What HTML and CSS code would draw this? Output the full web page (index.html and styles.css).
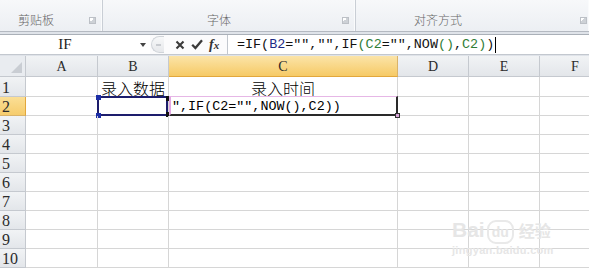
FILE: index.html
```html
<!DOCTYPE html>
<html lang="zh-CN">
<head>
  <meta charset="UTF-8">
  <title>录入时间</title>
  <link rel="stylesheet" href="styles.css">
</head>
<body>
  <!-- ribbon groups -->
  <div class="ribbon">
    <div class="group group-clip">
      <span class="group-label">剪贴板</span>
      <span class="launcher"></span>
    </div>
    <div class="group group-font">
      <span class="group-label">字体</span>
      <span class="launcher"></span>
    </div>
    <div class="group group-align">
      <span class="group-label">对齐方式</span>
      <span class="launcher"></span>
    </div>
  </div>

  <!-- formula bar -->
  <div class="formula-row">
    <div class="formula-bar">
      <div class="name-box">
        <span class="name-text">IF</span>
        <span class="name-arrow"></span>
      </div>
      <div class="tools">
        <span class="grip"><span class="grip-dash"></span></span>
        <svg class="tool-icon icon-cancel" width="10" height="10" viewBox="0 0 10 10">
          <path d="M1.5 1.5 L8.5 8.5 M8.5 1.5 L1.5 8.5" stroke="#3a3a3a" stroke-width="2.1" fill="none"/>
        </svg>
        <svg class="tool-icon icon-enter" width="12" height="11" viewBox="0 0 12 11">
          <path d="M1.2 5.8 L4.4 9 L11 1.2" stroke="#3a3a3a" stroke-width="2.3" fill="none"/>
        </svg>
        <span class="fx">f<span class="fx-x">x</span></span>
      </div>
      <div class="formula-input">
        <span class="formula-text">=IF(<span class="ref-b">B2</span>="","",IF<span class="paren">(</span><span class="ref-c">C2</span>="",NOW<span class="paren">()</span>,<span class="ref-c">C2</span><span class="paren">)</span>)</span><span class="caret"></span>
      </div>
    </div>
  </div>

  <!-- worksheet -->
  <div class="sheet">
    <div class="hd corner"><span class="corner-mark"></span></div>
    <div class="hd col">A</div>
    <div class="hd col">B</div>
    <div class="hd col col-active">C</div>
    <div class="hd col">D</div>
    <div class="hd col">E</div>
    <div class="hd col">F</div>

    <div class="hd row">1</div>
    <div class="cell"></div>
    <div class="cell cell-text">录入数据</div>
    <div class="cell cell-text">录入时间</div>
    <div class="cell"></div>
    <div class="cell"></div>
    <div class="cell"></div>

    <div class="hd row row-active">2</div>
    <div class="cell"></div>
    <div class="cell cell-active">
      <span class="active-frame"></span>
      <span class="handle handle-tl"></span>
      <span class="handle handle-bl"></span>
      <span class="mark mark-tr"></span>
      <span class="mark mark-br"></span>
    </div>
    <div class="cell cell-edit">
      <span class="edit-frame"></span>
      <span class="edit-text">",IF(C2="",NOW(),C2))</span>
      <span class="edit-handle"></span>
    </div>
    <div class="cell"></div>
    <div class="cell"></div>
    <div class="cell"></div>

    <div class="hd row">3</div>
    <div class="cell"></div><div class="cell"></div><div class="cell"></div><div class="cell"></div><div class="cell"></div><div class="cell"></div>
    <div class="hd row">4</div>
    <div class="cell"></div><div class="cell"></div><div class="cell"></div><div class="cell"></div><div class="cell"></div><div class="cell"></div>
    <div class="hd row">5</div>
    <div class="cell"></div><div class="cell"></div><div class="cell"></div><div class="cell"></div><div class="cell"></div><div class="cell"></div>
    <div class="hd row">6</div>
    <div class="cell"></div><div class="cell"></div><div class="cell"></div><div class="cell"></div><div class="cell"></div><div class="cell"></div>
    <div class="hd row">7</div>
    <div class="cell"></div><div class="cell"></div><div class="cell"></div><div class="cell"></div><div class="cell"></div><div class="cell"></div>
    <div class="hd row">8</div>
    <div class="cell"></div><div class="cell"></div><div class="cell"></div><div class="cell"></div><div class="cell"></div><div class="cell"></div>
    <div class="hd row">9</div>
    <div class="cell"></div><div class="cell"></div><div class="cell"></div><div class="cell"></div><div class="cell"></div><div class="cell"></div>
    <div class="hd row">10</div>
    <div class="cell"></div><div class="cell"></div><div class="cell"></div><div class="cell"></div><div class="cell"></div><div class="cell"></div>
  </div>

  <div class="watermark">
    <div class="wm-logo"><span class="wm-bai">Bai</span><span class="wm-du">du</span><span class="wm-jy">经验</span></div>
    <div class="wm-url">jingyan.baidu.com</div>
  </div>
</body>
</html>
```

FILE: styles.css
```css
body {
  margin: 0;
  width: 589px;
  height: 271px;
  overflow: hidden;
  background-color: #fff;
  font-family: "Noto Sans CJK SC", "Liberation Sans", sans-serif;
  color: #000;
  position: relative;
}

/* ribbon */
.ribbon {
  display: flex;
  height: 31px;
  background: linear-gradient(#f7f8fa, #eceff3);
  border-bottom: 1px solid #b4b9c1;
}

.group {
  display: flex;
  align-items: center;
  box-sizing: border-box;
  height: 31px;
  padding-top: 9px;
  border-right: 1px solid #c9ced5;
  box-shadow: inset -1px 0 0 #fafbfc;
}

.group-clip {
  width: 103px;
  padding-left: 18px;
}

.group-font {
  width: 253px;
  padding-left: 104px;
}

.group-align {
  flex: 1;
  padding-left: 58px;
  border-right: none;
}

.group-label {
  font-size: 12px;
  line-height: 14px;
  font-weight: 300;
  color: #666;
}

.launcher {
  margin-left: auto;
  margin-right: 6px;
  width: 5px;
  height: 5px;
  border: 1px solid #bcc0c6;
  background: linear-gradient(135deg, #fff 40%, #cdd1d6 40%);
}

.group-align .launcher {
  margin-right: 2px;
}

/* formula bar */
.formula-row {
  padding: 2px 0 1px;
  background-color: #dfe3e9;
}

.formula-bar {
  display: flex;
  height: 19px;
  background-color: #fff;
  border-top: 1px solid #aab0b8;
  border-bottom: 1px solid #c3c8cf;
}

.name-box {
  display: flex;
  align-items: center;
  width: 150px;
}

.name-text {
  width: 130px;
  text-align: center;
  font-family: "Liberation Serif", serif;
  font-size: 15px;
  color: #222;
}

.name-arrow {
  margin-left: 10px;
  width: 0;
  height: 0;
  border-left: 3px solid transparent;
  border-right: 3px solid transparent;
  border-top: 4px solid #444;
}

.tools {
  display: flex;
  align-items: center;
  width: 78px;
  box-sizing: border-box;
  border-right: 1px solid #c2c7ce;
  background-color: #fbfbfc;
}

.grip {
  display: flex;
  align-items: center;
  width: 13px;
  height: 17px;
  margin-left: 1px;
  box-sizing: border-box;
  border-radius: 9px 0 0 9px;
  border: 1px solid #d0d4d9;
  border-right: none;
  background: linear-gradient(#f7f8f9, #e6e8eb);
}

.grip-dash {
  margin-left: 4px;
  width: 5px;
  height: 2px;
  background-color: #c9ccd1;
}

.tool-icon {
  display: block;
}

.icon-cancel {
  margin-left: 11px;
}

.icon-enter {
  margin-left: 6px;
}

.fx {
  margin-left: 6px;
  font-family: "Liberation Serif", serif;
  font-style: italic;
  font-weight: bold;
  font-size: 14px;
  color: #333;
}

.fx-x {
  font-size: 11px;
}

.formula-input {
  display: flex;
  align-items: center;
  padding-left: 9px;
  flex: 1;
}

.formula-text {
  font-family: "Liberation Mono", monospace;
  font-size: 13.4px;
  color: #111;
  white-space: pre;
}

.ref-b {
  color: #1e2b86;
}

.ref-c,
.paren {
  color: #2f7d36;
}

.caret {
  width: 1px;
  height: 16px;
  margin-left: 1px;
  background-color: #000;
}

/* worksheet grid */
.sheet {
  display: grid;
  grid-template-columns: 26px 72px 71px 229px 71px 71px 71px;
  grid-template-rows: 21px 20px repeat(9, 19px);
  width: 611px;
}

.sheet > div {
  box-sizing: border-box;
  border-right: 1px solid #d6d6d6;
  border-bottom: 1px solid #d6d6d6;
}

.hd {
  background: linear-gradient(#f1f3f5, #e3e6ea);
  font-family: "Liberation Serif", serif;
  color: #2b2b2b;
}

.sheet > .hd {
  border-right-color: #c5c9cf;
  border-bottom-color: #c5c9cf;
}

.col {
  display: flex;
  align-items: center;
  justify-content: center;
  padding-top: 2px;
  font-size: 14px;
}

.row {
  display: flex;
  align-items: flex-end;
  padding-left: 2px;
  font-size: 16px;
  line-height: 17px;
}

.sheet > .col-active {
  background: linear-gradient(#fbe4a8, #f6ca66);
  border-bottom-color: #e2a73c;
  border-right-color: #d9b36a;
}

.sheet > .row-active {
  background: linear-gradient(#fbdf96, #f6cc6c);
  border-right-color: #e2a73c;
  border-bottom-color: #d9b36a;
}

.corner {
  position: relative;
  background: #e9ecf0;
}

.corner-mark {
  position: absolute;
  right: 3px;
  bottom: 3px;
  width: 0;
  height: 0;
  border-left: 11px solid transparent;
  border-bottom: 11px solid #c9cdd3;
}

.cell {
  position: relative;
}

.cell-text {
  display: flex;
  align-items: flex-end;
  justify-content: center;
  font-size: 16px;
  line-height: 16px;
  font-weight: 300;
  color: #000;
}

/* active cell B2 */
.active-frame {
  position: absolute;
  top: -1px;
  left: -1px;
  right: 0;
  bottom: -1px;
  border: 2px solid #1d1d6c;
}

.handle {
  position: absolute;
  left: -2px;
  width: 5px;
  height: 5px;
  background-color: #1c2ea6;
}

.handle-tl {
  top: -2px;
}

.handle-bl {
  bottom: -3px;
}

.mark {
  position: absolute;
  right: -1px;
  width: 3px;
  height: 5px;
  background-color: #111;
}

.mark-tr {
  top: -1px;
}

.mark-br {
  bottom: -2px;
}

/* in-cell edit overflow C2 */
.sheet > .cell-edit {
  overflow: visible;
  z-index: 1;
}

.edit-frame {
  position: absolute;
  top: -1px;
  left: 0;
  right: -1px;
  bottom: -1px;
  border-top: 1px solid #e6b7e6;
  border-left: 2px solid #e2a6e2;
  border-right: 2px solid #2a2a2a;
  border-bottom: 2px solid #2a2a2a;
  background-color: #fff;
}

.edit-text {
  position: absolute;
  left: 3px;
  top: 1px;
  font-family: "Liberation Mono", monospace;
  font-size: 13.4px;
  line-height: 17px;
  color: #000;
  white-space: pre;
}

.edit-handle {
  position: absolute;
  right: -3px;
  bottom: -3px;
  width: 5px;
  height: 5px;
  background-color: #d9a6d9;
  border: 1px solid #333;
  box-sizing: border-box;
}

/* watermark */
.watermark {
  position: absolute;
  left: 452px;
  top: 218px;
  color: #e6e6e6;
  pointer-events: none;
}

.wm-logo {
  display: flex;
  align-items: baseline;
  gap: 2px;
  font-family: "Liberation Sans", sans-serif;
  font-weight: bold;
}

.wm-bai {
  font-size: 21px;
}

.wm-du {
  font-size: 14px;
  padding: 2px 3px;
  border-radius: 9px;
  border: 2px solid #e9e9e9;
}

.wm-jy {
  margin-left: 3px;
  font-family: "Noto Sans CJK SC", sans-serif;
  font-size: 16px;
}

.wm-url {
  font-family: "Liberation Sans", sans-serif;
  font-size: 11px;
  font-weight: bold;
  letter-spacing: 0.3px;
}
```
